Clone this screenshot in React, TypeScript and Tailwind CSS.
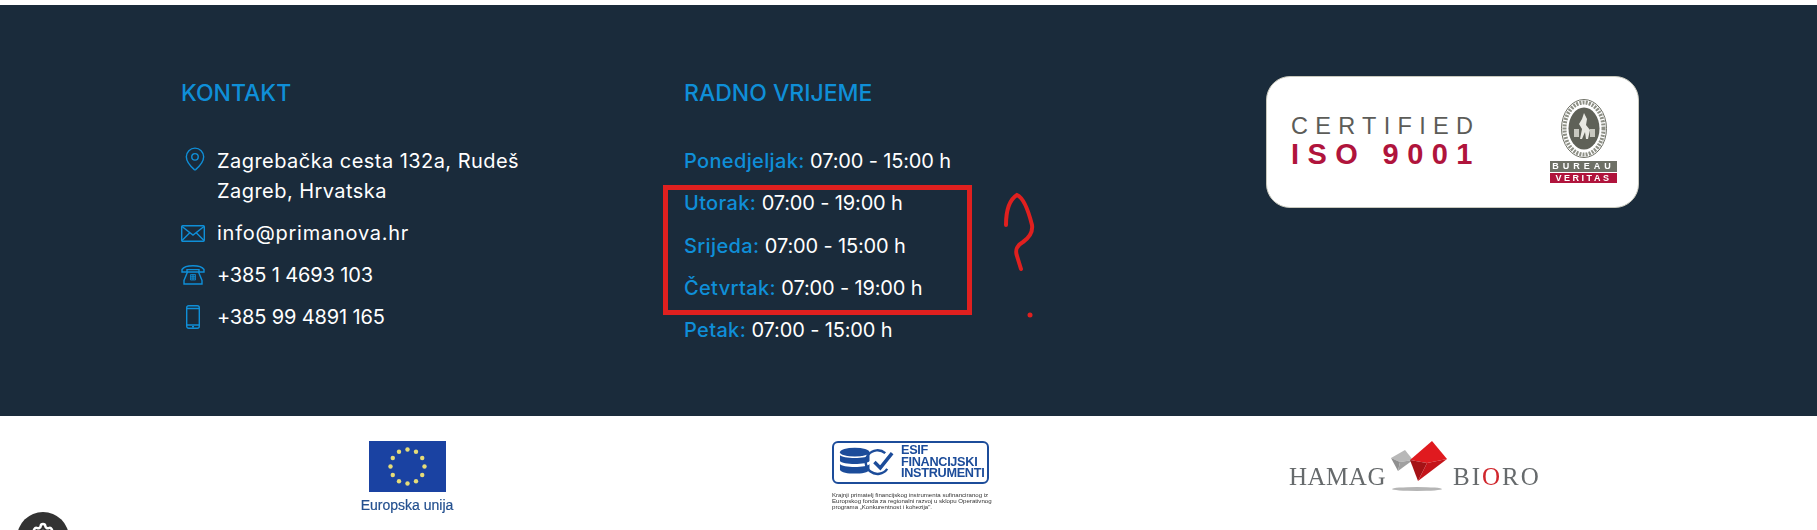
import { MapPin, Settings } from "lucide-react";

const hours = [
  { day: "Ponedjeljak:", time: "07:00 - 15:00 h" },
  { day: "Utorak:", time: "07:00 - 19:00 h" },
  { day: "Srijeda:", time: "07:00 - 15:00 h" },
  { day: "Četvrtak:", time: "07:00 - 19:00 h" },
  { day: "Petak:", time: "07:00 - 15:00 h" },
];

function MailIcon() {
  return (
    <svg width="24" height="17" viewBox="0 0 24 17" fill="none" stroke="#0f8fd8" strokeWidth="1.4">
      <rect x="0.7" y="0.7" width="22.6" height="15.6" rx="1" />
      <path d="M1 1.5 12 10 23 1.5M1 15.5l8-8M23 15.5l-8-8" />
    </svg>
  );
}

function PhoneIcon() {
  return (
    <svg width="24" height="20" viewBox="0 0 24 20" fill="none" stroke="#0f8fd8" strokeWidth="1.4">
      <path d="M1 7V4.5C3 1.5 8 .8 12 .8s9 .7 11 3.7V7h-5V4.6H6V7z" />
      <path d="M6.5 7 3 15.5V19h18v-3.500L17.500 7z" />
      <path d="M9.500 9.500h5v5.500h-5zM9.500 11.300h5M9.500 13.100h5M11.200 9.500V15M12.800 9.500V15" strokeWidth="0.8" />
    </svg>
  );
}

function MobileIcon() {
  return (
    <svg width="14" height="24" viewBox="0 0 14 24" fill="none" stroke="#0f8fd8" strokeWidth="1.4">
      <rect x="0.7" y="0.7" width="12.6" height="22.6" rx="2" />
      <path d="M1 3.500h12M1 20h12" />
      <path d="M6 21.800h2" />
    </svg>
  );
}

function IsoSeal() {
  return (
    <div className="flex flex-col items-center w-[67px] blur-[0.3px]">
      <svg width="46" height="59" viewBox="0 0 46 59">
        <ellipse cx="23" cy="29.500" rx="22.500" ry="29" fill="#fff" stroke="#6e7066" strokeWidth="1" />
        <ellipse cx="23" cy="29.500" rx="15.500" ry="21" fill="#5f6158" />
        <ellipse cx="23" cy="29.500" rx="19.500" ry="26" fill="none" stroke="#8d8f85" strokeWidth="4" strokeDasharray="2 1.200" />
        <path d="M23 14l3 6-1 6 4 5-2 9h-2l-1-7-3 7h-2l2-10-3-5 3-5z" fill="#e8e8e2" />
        <path d="M13 30h5v8h-5zM29 30h5v8h-5z" fill="#c8c8c0" />
      </svg>
      <div className="mt-[3px] w-full h-[11px] bg-[#6e7066] text-white text-[9px] leading-[11px] font-bold tracking-[4px] text-center font-['Liberation_Sans',sans-serif]">
        BUREAU
      </div>
      <div className="mt-px w-full h-[10px] bg-[#b0143c] text-white text-[9px] leading-[10px] font-bold tracking-[2.5px] text-center font-['Liberation_Sans',sans-serif]">
        VERITAS
      </div>
    </div>
  );
}

function IsoBadge() {
  return (
    <div className="w-[373px] h-[132px] bg-white rounded-[24px] border border-[#c9c9bd] flex items-center justify-between pl-[24px] pr-[21px] font-['Liberation_Sans',sans-serif]">
      <div className="-mt-[3px] whitespace-nowrap">
        <div className="text-[23.500px] leading-[26px] tracking-[7.300px] text-[#5c5c58]">CERTIFIED</div>
        <div className="text-[29px] leading-[30px] font-bold tracking-[8.400px] text-[#b0143c]">ISO 9001</div>
      </div>
      <div className="-mt-[2px]">
        <IsoSeal />
      </div>
    </div>
  );
}

function EuLogo() {
  const stars = Array.from({ length: 12 }, (_, i) => {
    const a = (i * Math.PI) / 6;
    return { x: 38.5 + 17 * Math.sin(a), y: 25.500 - 17 * Math.cos(a) };
  });
  return (
    <div className="w-[90px] flex flex-col items-center blur-[0.3px]">
      <svg width="77" height="51" viewBox="0 0 77 51">
        <rect width="77" height="51" fill="#1a42a2" />
        {stars.map((s, i) => (
          <circle key={i} cx={s.x} cy={s.y} r="2.200" fill="#e6dc78" />
        ))}
      </svg>
      <div className="mt-[5px] text-[14px] leading-[16px] font-medium text-[#24508f] font-['Liberation_Sans',sans-serif] whitespace-nowrap [-webkit-text-stroke:0.2px_#24508f]">
        Europska unija
      </div>
    </div>
  );
}

function EsifLogo() {
  return (
    <div className="w-[157px] flex flex-col blur-[0.3px]">
      <div className="h-[43px] rounded-[6px] border-2 border-[#1c4c9a] flex items-center pl-[5px] gap-[1px]">
        <svg width="61" height="31" viewBox="0 0 62 31" fill="none">
          <ellipse cx="16" cy="5" rx="15" ry="4.500" fill="#1c4c9a" />
          <path d="M1 8c2 4 28 4 30 0v6c-2 4-28 4-30 0zM1 17c2 4 28 4 30 0v6c-2 5-28 5-30 0z" fill="#1c4c9a" />
          <path d="M47 6a12 12 0 1 0 2 16" stroke="#1c4c9a" strokeWidth="2.500" />
          <path d="M36 15l6 6 12-15" stroke="#1c4c9a" strokeWidth="3.500" />
        </svg>
        <div className="text-[12.700px] leading-[11.500px] font-bold tracking-[-0.3px] text-[#1c4c9a] font-['Liberation_Sans',sans-serif]">
          <div>ESIF</div>
          <div>FINANCIJSKI</div>
          <div>INSTRUMENTI</div>
        </div>
      </div>
      <div className="mt-[8px] text-[6.100px] leading-[6.200px] text-[#333] font-['Liberation_Sans',sans-serif] whitespace-nowrap">
        <div>Krajnji primatelj financijskog instrumenta sufinanciranog iz</div>
        <div>Europskog fonda za regionalni razvoj u sklopu Operativnog</div>
        <div>programa „Konkurentnost i kohezija".</div>
      </div>
    </div>
  );
}

function HamagLogo() {
  return (
    <div className="relative w-[250px] h-[60px] blur-[0.3px] font-['Liberation_Serif',serif] text-[#666a6c] text-[25px] leading-[30px]">
      <span className="absolute left-0 top-[22px] tracking-[0.5px]">HAMAG</span>
      <svg className="absolute left-[100px] top-0" width="60" height="54" viewBox="0 0 60 54">
        <ellipse cx="28" cy="49" rx="25" ry="2" fill="#b5b5b5" />
        <path d="M2 18 16 10l8 10-13 2z" fill="#b8b8b8" />
        <path d="M2 18l9 4-2 9z" fill="#8f8f8f" />
        <path d="M11 22l13-2-15 11z" fill="#a0a0a0" />
        <path d="M21 20 43 1l15 18-20 4z" fill="#e01a1f" />
        <path d="M21 20l17 3-9 18z" fill="#a51216" />
        <path d="M38 23l20-4-29 22z" fill="#c4141a" />
      </svg>
      <span className="absolute left-[164px] top-[22px] tracking-[2px]">
        BI<span className="text-[#d0262c]">O</span>RO
      </span>
    </div>
  );
}

export default function App() {
  return (
    <div className="relative w-[1817px] h-[530px] overflow-hidden bg-white font-['Inter',sans-serif]">
      <div className="h-[5px]" />
      <footer className="relative h-[411px] bg-[#1a2b3b] pt-[73px] pl-[181px] flex text-white text-[20px] leading-[30px]">
        <section className="w-[503px]">
          <h3 className="mb-[38px] text-[23px] leading-[30px] font-medium text-[#0f8fd8]">KONTAKT</h3>
          <div className="flex flex-col gap-[12px]">
            <div className="flex">
              <div className="w-[36px] pl-[1px]">
                <MapPin size={26} strokeWidth={1.300} color="#0f8fd8" />
              </div>
              <div className="tracking-[0.45px]">
                Zagrebačka cesta 132a, Rudeš
                <br />
                Zagreb, Hrvatska
              </div>
            </div>
            <div className="flex items-center">
              <div className="w-[36px] flex"><MailIcon /></div>
              <div className="tracking-[0.75px]">info@primanova.hr</div>
            </div>
            <div className="flex items-center">
              <div className="w-[36px] flex"><PhoneIcon /></div>
              <div className="tracking-[-0.15px]">+385 1 4693 103</div>
            </div>
            <div className="flex items-center">
              <div className="w-[36px] flex pl-[5px]"><MobileIcon /></div>
              <div className="tracking-[-0.15px]">+385 99 4891 165</div>
            </div>
          </div>
        </section>
        <section className="w-[582px]">
          <h3 className="mb-[38px] text-[23px] leading-[30px] font-medium text-[#0f8fd8]">RADNO VRIJEME</h3>
          <div className="flex flex-col gap-[12.250px]">
            {hours.map((h) => (
              <div key={h.day} className="tracking-[-0.15px]">
                <span className="font-medium text-[#0f8fd8] tracking-[0.35px]">{h.day}</span> {h.time}
              </div>
            ))}
          </div>
        </section>
        <div className="-mt-[2px]">
          <IsoBadge />
        </div>

        {/* annotation drawn over the screenshot */}
        <div className="absolute left-[663px] top-[180px] w-[309px] h-[130px] border-[5px] border-[#e0201f]" />
        <svg className="absolute left-[1000px] top-[185px]" width="40" height="130" viewBox="0 0 40 130" fill="none">
          <path
            d="M6 35C6 22 9 10 17 5c7 3 12 18 15 30 1 7-2 12-9 17-7 4-8 8-6 14l4 13"
            stroke="#e0201f"
            strokeWidth="4"
            strokeLinecap="round"
          />
          <circle cx="30" cy="125" r="2.500" fill="#e0201f" />
        </svg>
      </footer>
      <div className="flex items-start pt-[25px] pl-[362px]">
        <EuLogo />
        <div className="ml-[380px]"><EsifLogo /></div>
        <div className="ml-[300px] -mt-[1px]"><HamagLogo /></div>
      </div>

      {/* cookie settings button */}
      <div className="absolute left-[17px] top-[512px] w-[52px] h-[52px] rounded-full bg-[#333] flex justify-center pt-[10px]">
        <Settings size={24} strokeWidth={2.500} color="#fff" />
      </div>
    </div>
  );
}
